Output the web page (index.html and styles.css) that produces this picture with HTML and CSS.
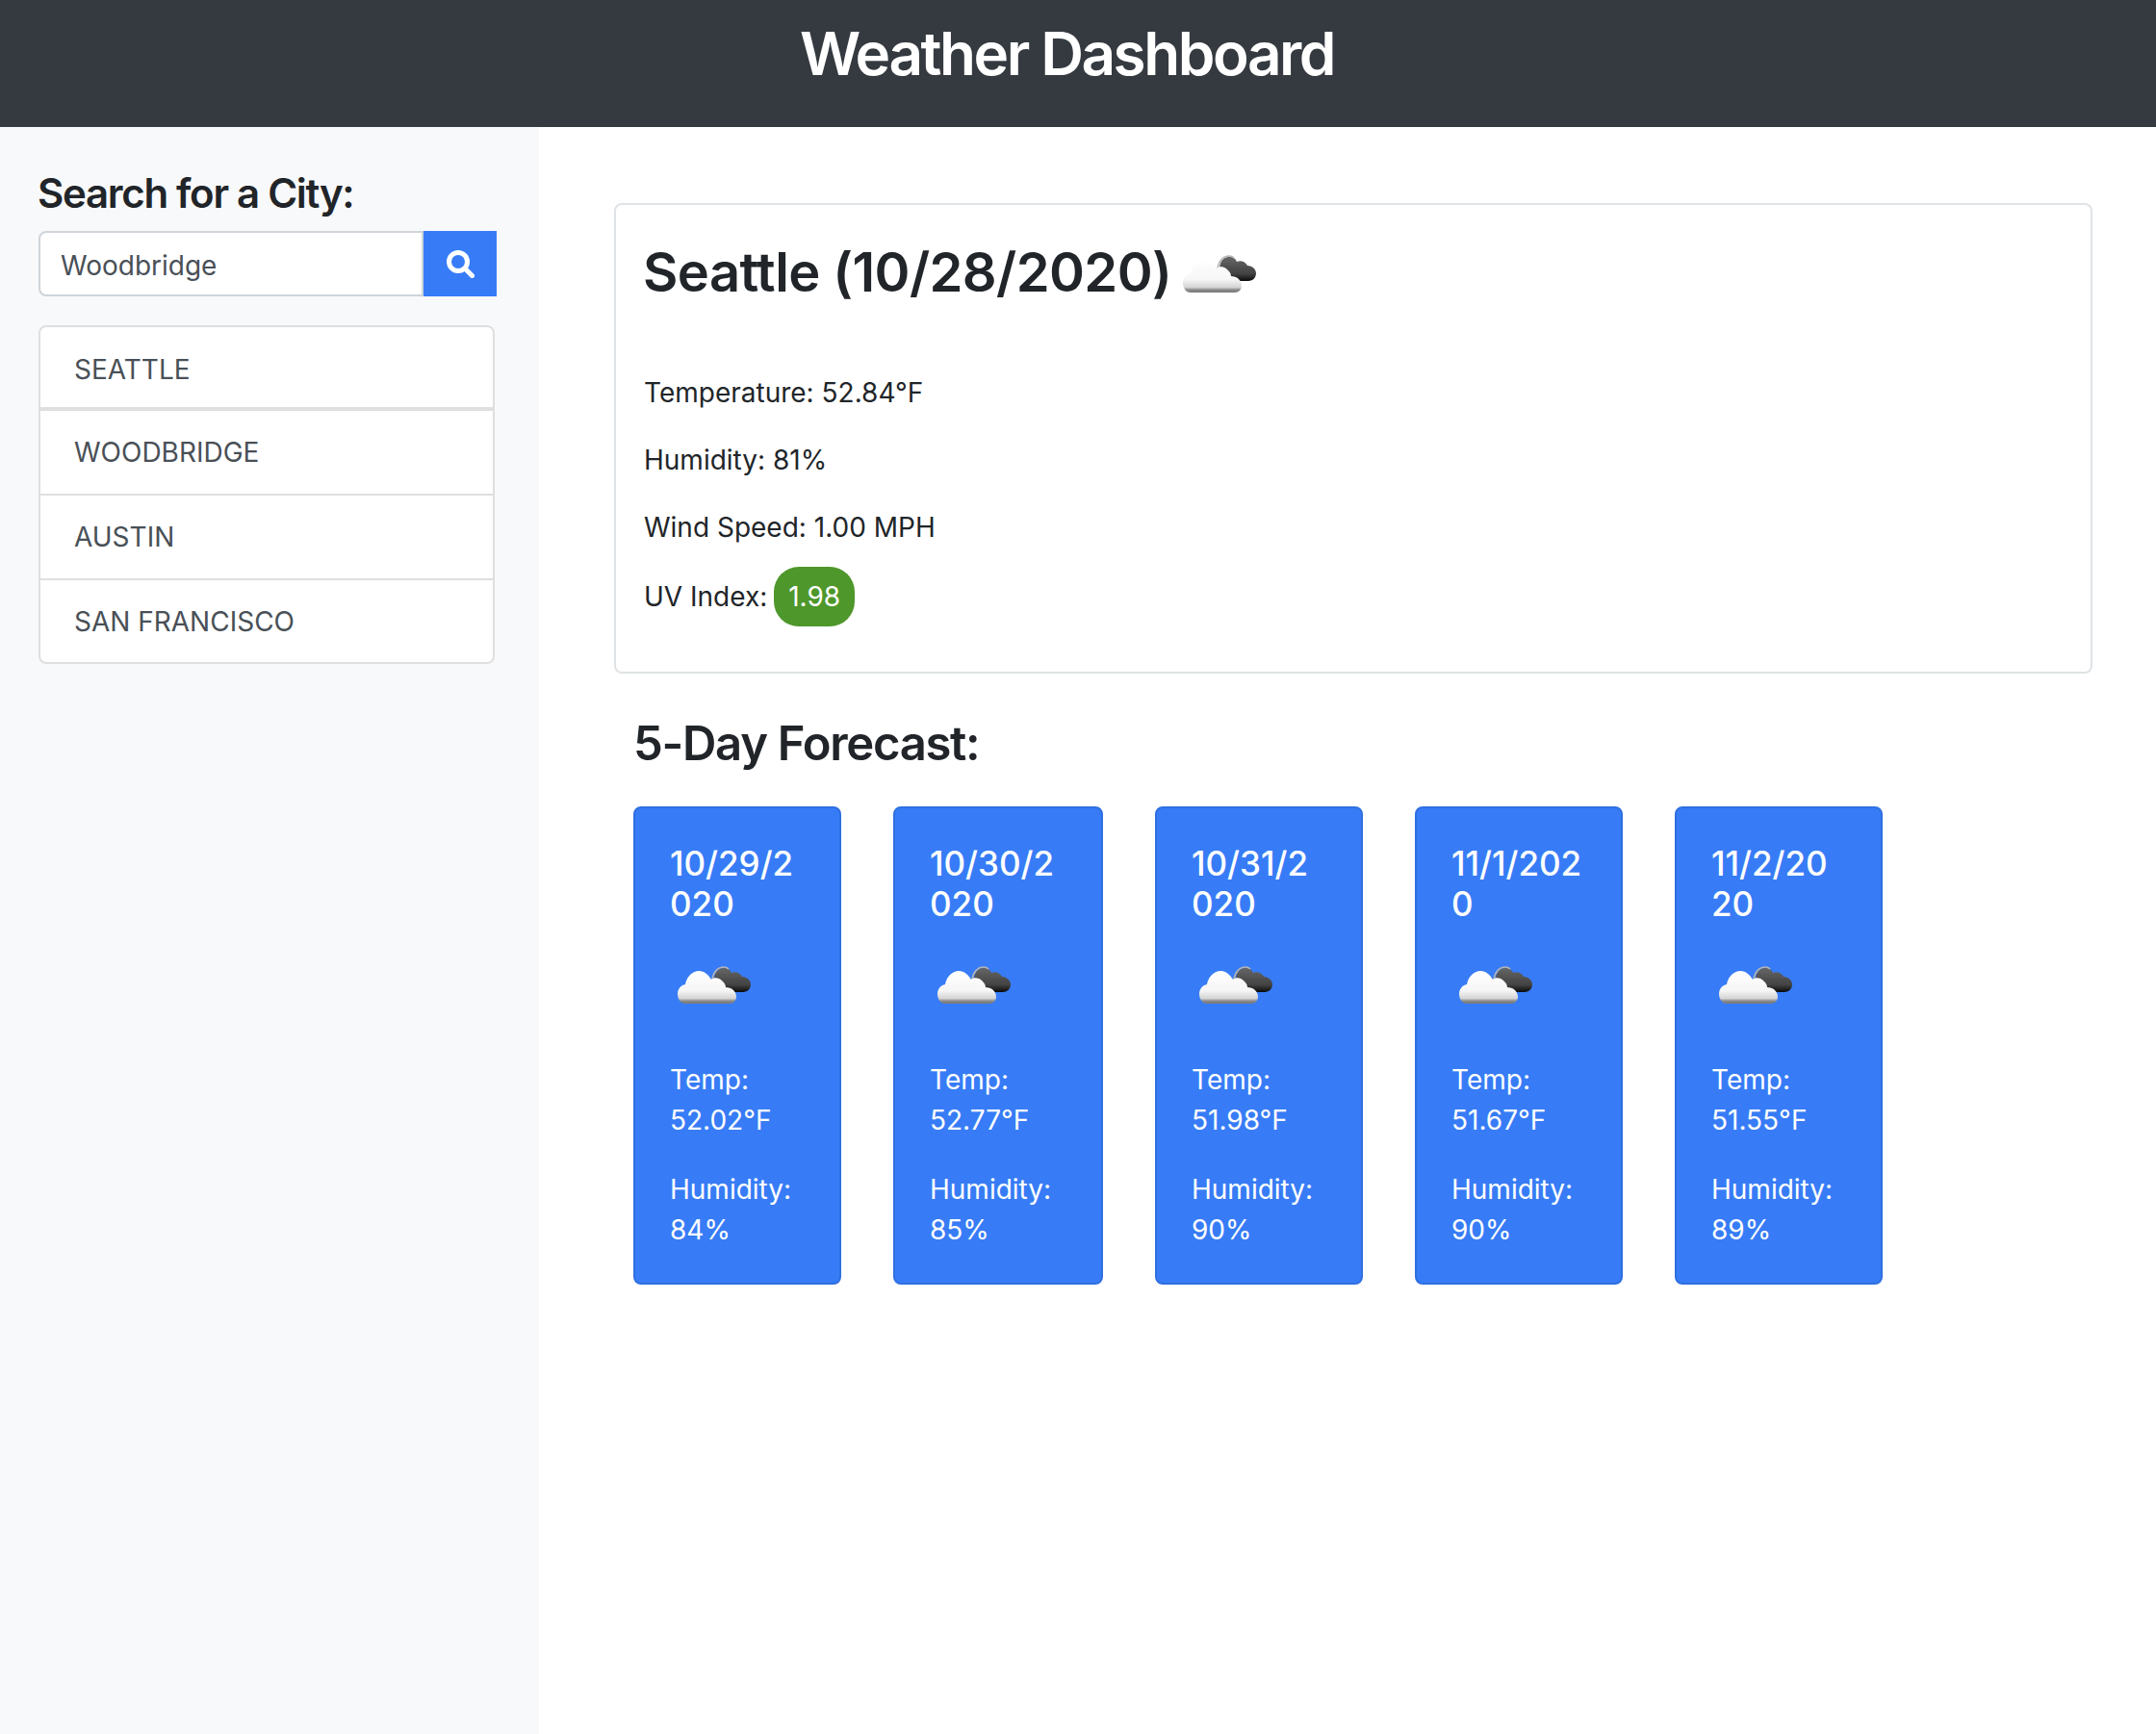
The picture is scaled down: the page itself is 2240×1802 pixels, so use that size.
FILE: index.html
```html
<!DOCTYPE html>
<html lang="en">
<head>
  <meta charset="UTF-8">
  <title>Weather Dashboard</title>
  <link rel="stylesheet" href="styles.css">
</head>
<body>
  <svg class="defs" width="0" height="0">
    <defs>
      <linearGradient id="cloud-light" x1="0" y1="0" x2="0" y2="1">
        <stop offset="0" stop-color="#ffffff"/>
        <stop offset="0.6" stop-color="#f6f6f6"/>
        <stop offset="0.84" stop-color="#d4d4d4"/>
        <stop offset="0.92" stop-color="#8a8a8a"/>
        <stop offset="1" stop-color="#777777"/>
      </linearGradient>
      <linearGradient id="cloud-dark" x1="0" y1="0" x2="0" y2="1">
        <stop offset="0" stop-color="#666666"/>
        <stop offset="0.7" stop-color="#424242"/>
        <stop offset="1" stop-color="#0c0c0c"/>
      </linearGradient>
      <filter id="cloud-soft" x="-5%" y="-5%" width="110%" height="110%">
        <feGaussianBlur stdDeviation="0.5"/>
      </filter>
      <symbol id="cloud-icon" viewBox="0 0 100 100">
        <g filter="url(#cloud-soft)">
          <path fill="url(#cloud-dark)" d="M46 45C46 37 50 32 56 32C60 32 63 34 64 37C68 35 73 37 75 41C80 41 84 45 84 49C84 54 80 57 76 57L56 57Z"/>
          <path fill="none" stroke="#b5b5b5" stroke-width="1.6" d="M44 44C45 36 50 31 56 31C58 31 60 32 61 33"/>
          <path fill="url(#cloud-light)" d="M16 69C11 69 8 64 8 59C8 54 11 50 16 49C17 42 23 35 30 35C36 35 40 39 43 44C46 41 52 42 55 46C57 48 58 50 58 52C64 52 69 56 69 62C69 66 66 69 62 69Z"/>
        </g>
      </symbol>
    </defs>
  </svg>

  <header class="top-bar">
    <h1>Weather Dashboard</h1>
  </header>

  <div class="layout">
    <aside class="sidebar">
      <h4>Search for a City:</h4>
      <form class="search-group">
        <input class="search-input" type="text" value="Woodbridge">
        <button class="search-btn" type="button" aria-label="Search">
          <svg width="29" height="29" viewBox="0 0 29 29">
            <circle cx="12" cy="12" r="9.5" fill="none" stroke="#fff" stroke-width="5"/>
            <line x1="19.5" y1="19.5" x2="26.5" y2="26.5" stroke="#fff" stroke-width="5" stroke-linecap="round"/>
          </svg>
        </button>
      </form>
      <ul class="city-list">
        <li>Seattle</li>
        <li>Woodbridge</li>
        <li>Austin</li>
        <li>San Francisco</li>
      </ul>
    </aside>

    <main class="content">
      <section class="today">
        <h2>Seattle (10/28/2020) <svg class="today-icon"><use href="#cloud-icon"/></svg></h2>
        <p>Temperature: 52.84°F</p>
        <p>Humidity: 81%</p>
        <p>Wind Speed: 1.00 MPH</p>
        <p class="uv-row">UV Index: <span class="uv-badge">1.98</span></p>
      </section>

      <h3>5-Day Forecast:</h3>
      <div class="forecast">
        <div class="day-card">
          <h5>10/29/2020</h5>
          <svg class="day-icon"><use href="#cloud-icon"/></svg>
          <p>Temp: 52.02°F</p>
          <p>Humidity: 84%</p>
        </div>
        <div class="day-card">
          <h5>10/30/2020</h5>
          <svg class="day-icon"><use href="#cloud-icon"/></svg>
          <p>Temp: 52.77°F</p>
          <p>Humidity: 85%</p>
        </div>
        <div class="day-card">
          <h5>10/31/2020</h5>
          <svg class="day-icon"><use href="#cloud-icon"/></svg>
          <p>Temp: 51.98°F</p>
          <p>Humidity: 90%</p>
        </div>
        <div class="day-card">
          <h5>11/1/2020</h5>
          <svg class="day-icon"><use href="#cloud-icon"/></svg>
          <p>Temp: 51.67°F</p>
          <p>Humidity: 90%</p>
        </div>
        <div class="day-card">
          <h5>11/2/2020</h5>
          <svg class="day-icon"><use href="#cloud-icon"/></svg>
          <p>Temp: 51.55°F</p>
          <p>Humidity: 89%</p>
        </div>
      </div>
    </main>
  </div>
</body>
</html>
```

FILE: styles.css
```css
* {
  box-sizing: border-box;
}
body {
  font-family: Inter, "Noto Sans", sans-serif;
  font-size: 28px;
  line-height: 42px;
  color: #212529;
  background: #fff;
  margin: 0;
  min-height: 1802px;
  display: flex;
  flex-direction: column;
}
h1, h2, h3, h4, h5, p, ul {
  margin: 0;
  padding: 0;
}
h1, h2, h3, h4, h5 {
  font-weight: 580;
  line-height: 1.2;
}
.defs {
  position: absolute;
}
.top-bar {
  height: 132px;
  flex: none;
  padding: 19px 23px 0 0;
  background: #343a40;
  color: #fff;
  text-align: center;
}
.top-bar h1 {
  font-size: 62px;
  letter-spacing: -2.45px;
}
.layout {
  flex: 1;
  display: flex;
}
.sidebar {
  width: 560px;
  flex: none;
  background: #f8f9fa;
  padding: 44px 44px 0 39px;
}
.sidebar h4 {
  font-size: 42px;
  letter-spacing: -1.3px;
  margin-bottom: 14px;
}
.search-group {
  display: flex;
  height: 68px;
  margin-left: 1px;
}
.search-input {
  width: 400px;
  height: 68px;
  padding: 4px 21px 0;
  font: inherit;
  color: #495057;
  background: #fff;
  border: 2px solid #ced4da;
  border-radius: 8px 0 0 8px;
  outline: none;
}
.search-btn {
  width: 76px;
  padding: 0;
  border: none;
  background: #377cf6;
  display: flex;
  align-items: center;
  justify-content: center;
}
.city-list {
  list-style: none;
  width: 474px;
  margin: 30px 0 0 1px;
  background: #fff;
  border: 2px solid #dfdfdf;
  border-radius: 8px;
  color: #495057;
  text-transform: uppercase;
}
.city-list li {
  padding: 22px 35px;
  border-bottom: 2px solid #dfdfdf;
}
.city-list li:first-child {
  padding-top: 23px;
  padding-bottom: 18px;
  border-bottom-width: 4px;
}
.city-list li:last-child {
  padding-bottom: 21px;
  border-bottom: none;
}
.content {
  flex: 1;
  padding: 79px 66px 0 78px;
}
.today {
  height: 489px;
  padding: 28px 28px;
  border: 2px solid #dfe3e6;
  border-radius: 8px;
}
.today h2 {
  font-size: 56px;
  height: 146px;
  letter-spacing: -0.6px;
}
.today-icon {
  width: 100px;
  height: 100px;
  vertical-align: middle;
  margin: -6px 0 0 -10px;
}
.today p {
  margin-bottom: 28px;
  margin-left: 1px;
}
.today .uv-row {
  margin-bottom: 0;
  padding-top: 2px;
}
.uv-badge {
  display: inline-block;
  margin: -10px 0 -10px -1px;
  padding: 10px 15px;
  background: #4e972b;
  color: #fff;
  border-radius: 26px;
}
.content h3 {
  font-size: 49px;
  letter-spacing: -1.3px;
  margin: 44px 0 0 20px;
}
.forecast {
  display: flex;
  gap: 54px;
  margin: 35px 0 0 20px;
}
.day-card {
  width: 216px;
  height: 497px;
  padding: 36px 36px;
  background: #377cf6;
  border: 2px solid #2f6fe0;
  border-radius: 8px;
  color: #fff;
}
.day-card:nth-child(2) {
  width: 218px;
}
.day-card h5 {
  font-size: 35px;
  font-weight: 550;
  overflow-wrap: anywhere;
  margin-bottom: 14px;
}
.day-icon {
  display: block;
  width: 100px;
  height: 100px;
  margin-bottom: 27px;
}
.day-card p {
  margin-bottom: 30px;
}
```
